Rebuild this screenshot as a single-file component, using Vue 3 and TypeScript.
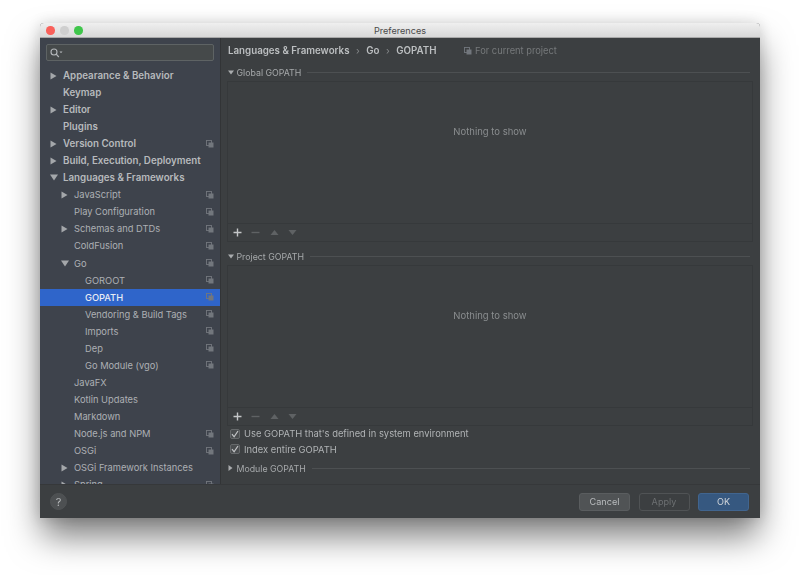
<script setup lang="ts">
type Item = { label: string; level: number; arrow?: "right" | "down"; bold?: boolean; copy?: boolean; selected?: boolean };

const items: Item[] = [
  { label: "Appearance & Behavior", level: 0, arrow: "right", bold: true },
  { label: "Keymap", level: 0, bold: true },
  { label: "Editor", level: 0, arrow: "right", bold: true },
  { label: "Plugins", level: 0, bold: true },
  { label: "Version Control", level: 0, arrow: "right", bold: true, copy: true },
  { label: "Build, Execution, Deployment", level: 0, arrow: "right", bold: true },
  { label: "Languages & Frameworks", level: 0, arrow: "down", bold: true },
  { label: "JavaScript", level: 1, arrow: "right", copy: true },
  { label: "Play Configuration", level: 1, copy: true },
  { label: "Schemas and DTDs", level: 1, arrow: "right", copy: true },
  { label: "ColdFusion", level: 1, copy: true },
  { label: "Go", level: 1, arrow: "down", copy: true },
  { label: "GOROOT", level: 2, copy: true },
  { label: "GOPATH", level: 2, copy: true, selected: true },
  { label: "Vendoring & Build Tags", level: 2, copy: true },
  { label: "Imports", level: 2, copy: true },
  { label: "Dep", level: 2, copy: true },
  { label: "Go Module (vgo)", level: 2, copy: true },
  { label: "JavaFX", level: 1 },
  { label: "Kotlin Updates", level: 1 },
  { label: "Markdown", level: 1 },
  { label: "Node.js and NPM", level: 1, copy: true },
  { label: "OSGi", level: 1, copy: true },
  { label: "OSGi Framework Instances", level: 1, arrow: "right" },
  { label: "Spring", level: 1, arrow: "right", copy: true },
];

const panels = ["Global GOPATH", "Project GOPATH"];
</script>

<template>
  <div class="page">
    <div class="frame">
      <div class="window">
        <div class="titlebar">
          <div class="lights">
            <span class="light red"></span>
            <span class="light gray"></span>
            <span class="light green"></span>
          </div>
          <span class="title">Preferences</span>
        </div>

        <div class="body">
          <aside class="sidebar">
            <div class="search">
              <svg width="13" height="10" viewBox="0 0 13 10">
                <circle cx="4" cy="4" r="3" fill="none" stroke="#b4b7ba" stroke-width="1.1" />
                <path d="M6.2 6.2 L8.8 9" stroke="#b4b7ba" stroke-width="1.2" />
                <path d="M9.5 3.5 H12.5 L11 5.2 Z" fill="#b4b7ba" />
              </svg>
            </div>
            <div class="tree">
              <div
                v-for="item in items"
                :key="item.label"
                class="row"
                :class="['level-' + item.level, { bold: item.bold, selected: item.selected }]"
              >
                <span class="arrow-slot">
                  <svg v-if="item.arrow === 'right'" width="7" height="8" viewBox="0 0 7 8"><path d="M0.5 0.5 L6.5 4 L0.5 7.5 Z" fill="#a4a7aa" /></svg>
                  <svg v-if="item.arrow === 'down'" width="8" height="7" viewBox="0 0 8 7"><path d="M0 0.5 H8 L4 6.5 Z" fill="#a4a7aa" /></svg>
                </span>
                <span class="label">{{ item.label }}</span>
                <svg v-if="item.copy" class="copy" width="8" height="8" viewBox="0 0 8 8">
                  <rect x="0.5" y="0.5" width="5" height="5" fill="none" stroke="#72777d" stroke-width="0.9" />
                  <rect x="2.5" y="2.5" width="5" height="5" fill="#72777d" />
                </svg>
              </div>
            </div>
          </aside>

          <main class="content">
            <div class="crumbs">
              <span>Languages &amp; Frameworks</span>
              <span class="sep">›</span>
              <span>Go</span>
              <span class="sep">›</span>
              <span>GOPATH</span>
              <span class="scope">
                <svg width="8" height="8" viewBox="0 0 8 8">
                  <rect x="0.5" y="0.5" width="5" height="5" fill="none" stroke="#72777d" stroke-width="0.9" />
                  <rect x="2.5" y="2.5" width="5" height="5" fill="#72777d" />
                </svg>
                For current project
              </span>
            </div>

            <section v-for="name in panels" :key="name" class="group">
              <div class="group-head">
                <svg width="6" height="5" viewBox="0 0 6 5"><path d="M0 0.5 H6 L3 4.5 Z" fill="#a9acae" /></svg>
                <span>{{ name }}</span>
                <i class="rule"></i>
              </div>
              <div class="panel">
                <div class="empty">Nothing to show</div>
                <div class="toolbar">
                  <svg width="9" height="9" viewBox="0 0 9 9"><path d="M4.5 0.5 V8.5 M0.5 4.5 H8.5" stroke="#c4c6c8" stroke-width="1.4" /></svg>
                  <svg width="9" height="9" viewBox="0 0 9 9"><path d="M0.5 4.5 H8.5" stroke="#5f6264" stroke-width="1.4" /></svg>
                  <svg width="9" height="9" viewBox="0 0 9 9"><path d="M0.5 7 H8.5 L4.5 2 Z" fill="#5f6264" /></svg>
                  <svg width="9" height="9" viewBox="0 0 9 9"><path d="M0.5 2 H8.5 L4.5 7 Z" fill="#5f6264" /></svg>
                </div>
              </div>
            </section>

            <label class="check">
              <span class="box"><svg width="8" height="8" viewBox="0 0 8 8"><path d="M1 4.2 L3.1 6.8 L7 1" fill="none" stroke="#c4c6c8" stroke-width="1.2" /></svg></span>
              Use GOPATH that's defined in system environment
            </label>
            <label class="check">
              <span class="box"><svg width="8" height="8" viewBox="0 0 8 8"><path d="M1 4.2 L3.1 6.8 L7 1" fill="none" stroke="#c4c6c8" stroke-width="1.2" /></svg></span>
              Index entire GOPATH
            </label>

            <div class="group-head module">
              <svg width="5" height="6" viewBox="0 0 5 6"><path d="M0.5 0 L4.5 3 L0.5 6 Z" fill="#a9acae" /></svg>
              <span>Module GOPATH</span>
              <i class="rule"></i>
            </div>
          </main>
        </div>

        <footer class="footer">
          <button class="help">?</button>
          <div class="actions">
            <button class="btn">Cancel</button>
            <button class="btn disabled">Apply</button>
            <button class="btn primary">OK</button>
          </div>
        </footer>
      </div>
    </div>
  </div>
</template>

<style>
html, body { background: #fff; }
</style>

<style scoped>
.page {
  width: 800px; height: 575px;
  box-sizing: border-box;
  padding: 23px 40px 0;
  overflow: hidden;
}
.frame {
  height: 495px;
  border-radius: 4px 4px 0 0;
  box-shadow: 0 20px 34px -2px rgba(0, 0, 0, 0.52), 0 0 14px rgba(0, 0, 0, 0.14);
}
.window {
  height: 100%;
  display: flex; flex-direction: column;
  border-radius: 4px 4px 0 0;
  overflow: hidden;
  font-family: Inter, "Liberation Sans", sans-serif;
  font-size: 9.3px;
  color: #b6b9bb;
  background: #3c3f41;
  filter: blur(0.35px);
}

.titlebar {
  height: 15px; flex-shrink: 0;
  box-sizing: border-box;
  display: flex; align-items: center; justify-content: center;
  position: relative;
  background: linear-gradient(#efefef, #d8d8d8);
  border-bottom: 1px solid #a9a9a9;
}
.lights {
  position: absolute; left: 6px; top: 3px;
  display: flex; gap: 5.5px;
}
.light { width: 8.5px; height: 8.5px; border-radius: 50%; }
.red { background: #f9605a; }
.gray { background: #cfcfcf; }
.green { background: #3fc64b; }
.title { font-size: 9.1px; color: #4a4a4a; }

.body { flex: 1; display: flex; min-height: 0; }

.sidebar {
  width: 181px; flex-shrink: 0;
  box-sizing: border-box;
  background: #3e434c;
  border-right: 1px solid #323436;
  display: flex; flex-direction: column;
  overflow: hidden;
}
.search {
  height: 15px; flex-shrink: 0;
  margin: 6px 6px 6px;
  background: #45494a;
  border: 1px solid #5e6364;
  border-radius: 2px;
  display: flex; align-items: center;
  padding-left: 3px;
}
.tree { flex: 1; overflow: hidden; }
.row {
  height: 17.05px;
  display: flex; align-items: center;
  padding-right: 6px;
  color: #adb0b4;
}
.row.bold { font-weight: 600; font-size: 9.75px; color: #b7babd; }
.row.selected { background: #2f65ca; color: #e8ecf4; font-weight: 500; }
.arrow-slot { width: 10px; display: flex; align-items: center; margin-right: 3px; flex-shrink: 0; }
.level-0 { padding-left: 10px; }
.level-1 { padding-left: 21px; }
.level-2 { padding-left: 32px; }
.label { flex: 1; white-space: nowrap; }
.copy { flex-shrink: 0; }

.content {
  flex: 1; min-width: 0;
  padding: 0 7px 0 6px;
  display: flex; flex-direction: column;
}
.crumbs {
  height: 25px; flex-shrink: 0;
  padding-left: 1px;
  display: flex; align-items: center; gap: 6.5px;
  font-weight: 600;
  font-size: 9.75px;
  color: #bcbfc1;
}
.sep { font-weight: 400; color: #85888a; }
.scope {
  margin-left: 21px;
  display: flex; align-items: center; gap: 3px;
  font-weight: 400;
  font-size: 9.3px;
  color: #76797b;
}

.group-head {
  height: 18px; flex-shrink: 0;
  display: flex; align-items: center; gap: 2.5px;
  font-size: 8.8px;
  color: #a6a9ab;
  padding-left: 1px;
}
.group-head span { white-space: nowrap; }
.rule { flex: 1; height: 1px; background: #4d5052; margin: 0 3px; }

.panel {
  height: 161px;
  display: flex; flex-direction: column;
  border: 1px solid #36393b;
  box-sizing: border-box;
  margin-bottom: 5px;
}
.group:last-of-type .panel { margin-bottom: 0; }
.empty {
  flex: 1;
  padding-top: 44px;
  text-align: center;
  font-size: 9.5px;
  color: #8a8d8f;
}
.toolbar {
  height: 17px; flex-shrink: 0;
  display: flex; align-items: center; gap: 9.3px;
  padding-left: 5px;
  border-top: 1px solid #36393b;
}

.check {
  height: 15.5px; flex-shrink: 0;
  display: flex; align-items: center; gap: 4px;
  padding-left: 3px;
  font-size: 9.4px;
  color: #b0b3b5;
}
.box {
  width: 8px; height: 8px;
  display: flex; align-items: center; justify-content: center;
  background: #4a4d4f;
  border: 1px solid #66696b;
  border-radius: 2px;
}

.module { margin-top: 2px; gap: 3.5px; }

.footer {
  height: 34px; flex-shrink: 0;
  display: flex; align-items: center; justify-content: space-between;
  padding: 0 11px 0 10px;
  background: #3c3f41;
  border-top: 1px solid #36383a;
  box-sizing: border-box;
}
.help {
  width: 17px; height: 17px;
  padding: 0;
  border: 1px solid #505355;
  border-radius: 50%;
  background: #4d5052;
  color: #b6b9bb;
  font: 400 11px Inter, "Liberation Sans", sans-serif;
}
.actions { display: flex; gap: 8.5px; }
.btn {
  width: 51px; height: 18px;
  padding: 0;
  border: 1px solid #5a5d5f;
  border-radius: 3px;
  background: #505355;
  color: #b9bcbe;
  font: 400 9.1px Inter, "Liberation Sans", sans-serif;
}
.btn.disabled { background: transparent; border-color: #505355; color: #6d7072; }
.btn.primary { background: #365880; border-color: #41658f; color: #d2d6da; }
</style>
